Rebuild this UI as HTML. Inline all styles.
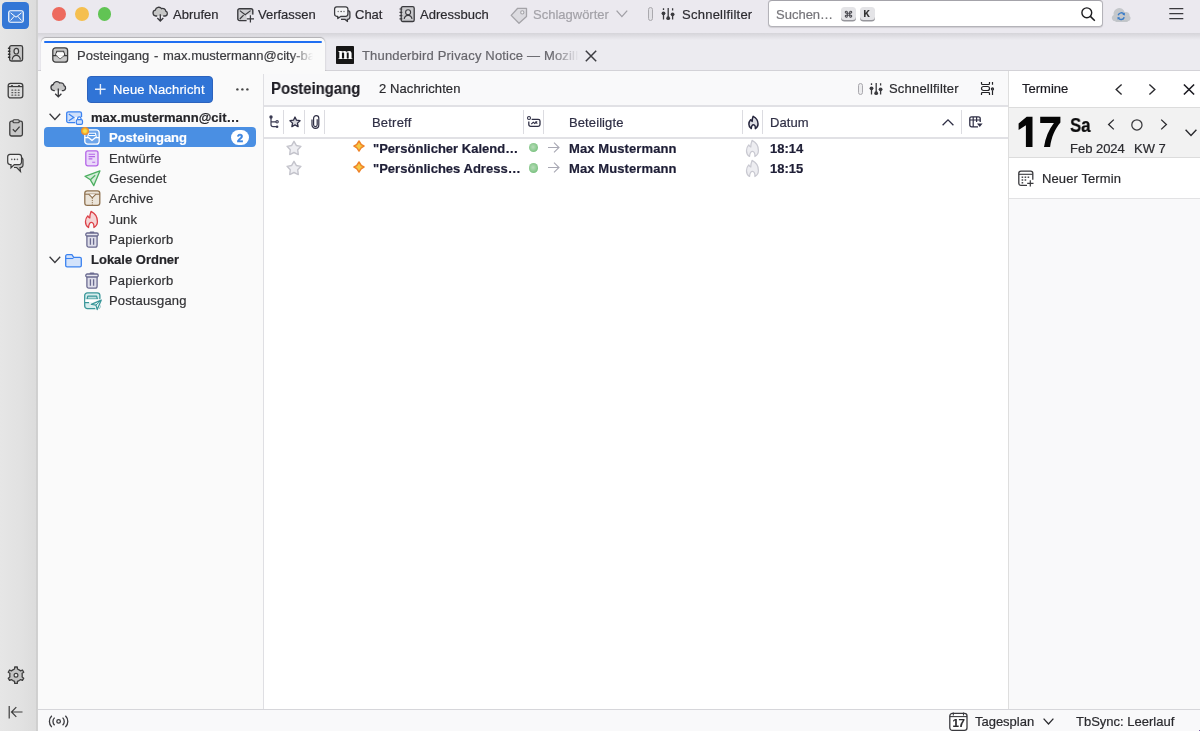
<!DOCTYPE html>
<html><head><meta charset="utf-8">
<style>
*{box-sizing:border-box;margin:0;padding:0}
html,body{width:1200px;height:731px;overflow:hidden;background:#fff;font-family:"Liberation Sans",sans-serif;font-size:13px;color:#2a2a2e}
.a{position:absolute}
.t{position:absolute;white-space:nowrap;line-height:16px;will-change:transform;-webkit-text-stroke:0.2px currentColor}
svg{position:absolute;overflow:visible}
.b{font-weight:700}
</style></head><body>

<!-- spaces bar -->
<div class="a" style="left:0;top:0;width:37.5px;height:731px;background:linear-gradient(to right,#e6e6e6 0,#e1e1e1 60%,#dcdcdc 94%,#cfcfcf 96%,#d2d2d2 100%)"></div>

<!-- toolbar -->
<div class="a" style="left:37.5px;top:0;width:1162.5px;height:33.5px;background:#ebe9ef;border-bottom:1px solid #cfced3"></div>
<!-- tabbar -->
<div class="a" style="left:37.5px;top:33px;width:1162.5px;height:38px;background:#ecebf0;border-bottom:1.3px solid #d3d2d7"></div>

<!-- folder pane -->
<div class="a" style="left:37.5px;top:71px;width:226px;height:638px;background:#fafafa;border-right:1.2px solid #dfdfe3"></div>
<!-- message pane -->
<div class="a" style="left:264px;top:71px;width:744px;height:35px;background:#f9f9fa"></div>
<div class="a" style="left:264px;top:105.2px;width:744px;height:1.7px;background:#e1e1e5"></div>
<div class="a" style="left:264px;top:137.2px;width:744px;height:1.7px;background:#e1e1e5"></div>
<!-- today pane -->
<div class="a" style="left:1008px;top:71px;width:192px;height:638px;background:#fff;border-left:1px solid #dedede"></div>
<div class="a" style="left:1009px;top:107px;width:191px;height:51px;background:#f2f2f2;border-top:1px solid #dcdcdc;border-bottom:1px solid #dcdcdc"></div>
<div class="a" style="left:1009px;top:198px;width:191px;height:511px;background:#f9f9fa;border-top:1.2px solid #e2e2e4"></div>
<!-- status bar -->
<div class="a" style="left:37.5px;top:709px;width:1162.5px;height:22px;background:#f9f9fa;border-top:1.2px solid #d6d6da"></div>


<!-- spaces icons -->
<div class="a" style="left:2.2px;top:2.2px;width:27.2px;height:27.2px;border-radius:4.2px;background:#3377d6"></div>
<svg style="left:8px;top:10px" width="16" height="13" viewBox="0 0 16 13"><rect x="0.75" y="0.75" width="14.5" height="11.5" rx="1.8" fill="#4a87dc" stroke="#fff" stroke-width="1.2"/><path d="M2.5 2.8 L8 7.2 L13.5 2.8 M2.5 10.5 L6.3 6.2 M13.5 10.5 L9.7 6.2" fill="none" stroke="#fff" stroke-width="1"/></svg>
<svg style="left:7px;top:45px" width="17" height="17" viewBox="0 0 17 17"><rect x="2.6" y="0.7" width="13" height="15.3" rx="1.8" fill="#c8c8c8" stroke="#3d3d3d" stroke-width="1.3"/><g fill="#2d2d2d"><rect x="0.8" y="2.6" width="2.6" height="1.3" rx="0.6"/><rect x="0.8" y="5.6" width="2.6" height="1.3" rx="0.6"/><rect x="0.8" y="8.6" width="2.6" height="1.3" rx="0.6"/><rect x="0.8" y="11.6" width="2.6" height="1.3" rx="0.6"/></g><ellipse cx="9.3" cy="6.2" rx="2.3" ry="2.8" fill="#d6d6d6" stroke="#3d3d3d" stroke-width="1.2"/><path d="M5.2 14.6C5.6 11.8 7 10.4 9.3 10.4S13 11.8 13.4 14.6" fill="#d6d6d6" stroke="#3d3d3d" stroke-width="1.2"/></svg>
<svg style="left:7px;top:82px" width="17" height="17" viewBox="0 0 17 17"><rect x="1.2" y="1.3" width="14.6" height="14.6" rx="2.4" fill="#dcdcdc" stroke="#3d3d3d" stroke-width="1.3"/><path d="M1.2 4.6h14.6" stroke="#3d3d3d" stroke-width="1.2"/><circle cx="5" cy="4" r="1.1" fill="#3d3d3d"/><circle cx="12" cy="4" r="1.1" fill="#3d3d3d"/><g fill="#5a5a5a"><rect x="4.3" y="7.5" width="2" height="1.3" rx="0.5"/><rect x="7.5" y="7.5" width="2" height="1.3" rx="0.5"/><rect x="10.7" y="7.5" width="2" height="1.3" rx="0.5"/><rect x="4.3" y="10" width="2" height="1.3" rx="0.5"/><rect x="7.5" y="10" width="2" height="1.3" rx="0.5"/><rect x="10.7" y="10" width="2" height="1.3" rx="0.5"/><rect x="4.3" y="12.5" width="2" height="1.3" rx="0.5"/><rect x="7.5" y="12.5" width="2" height="1.3" rx="0.5"/><rect x="10.7" y="12.5" width="2" height="1.3" rx="0.5"/></g></svg>
<svg style="left:9px;top:119px" width="15" height="18" viewBox="0 0 15 18"><rect x="0.8" y="2.2" width="12.6" height="14.8" rx="1.8" fill="#c8c8c8" stroke="#3d3d3d" stroke-width="1.3"/><rect x="4" y="0.7" width="6.2" height="3" rx="1" fill="#c8c8c8" stroke="#3d3d3d" stroke-width="1.1"/><path d="M3.8 10.2l2.4 2.4l4.4-5" fill="none" stroke="#3d3d3d" stroke-width="1.3"/></svg>
<svg style="left:7px;top:152px" width="17" height="21" viewBox="0 0 17 21"><path d="M5 5.5h8.5a2.5 2.5 0 0 1 2.5 2.5v5a2.5 2.5 0 0 1-2.5 2.5h-0.5l0.5 4l-3.8-4H7" fill="#c8c8c8" stroke="#3d3d3d" stroke-width="1.2"/><path d="M3 2.3h9a2.5 2.5 0 0 1 2.5 2.5v5.3a2.5 2.5 0 0 1-2.5 2.5H7.3L4 15.8V12.6H3A2.5 2.5 0 0 1 0.7 10.1V4.8A2.5 2.5 0 0 1 3 2.3z" fill="#efefef" stroke="#3d3d3d" stroke-width="1.2"/><circle cx="4.8" cy="7.4" r="0.8" fill="#666"/><circle cx="7.6" cy="7.4" r="0.8" fill="#444"/><circle cx="10.4" cy="7.4" r="0.8" fill="#666"/></svg>
<svg style="left:6.8px;top:665.8px" width="18" height="19" viewBox="0 0 18 19"><path d="M5.90 3.83 L7.56 2.96 L7.70 1.00 L10.30 1.00 L10.44 2.96 L12.10 3.83 L13.68 4.84 L15.45 3.98 L16.75 6.23 L15.12 7.33 L15.20 9.20 L15.12 11.07 L16.75 12.17 L15.45 14.42 L13.68 13.56 L12.10 14.57 L10.44 15.44 L10.30 17.40 L7.70 17.40 L7.56 15.44 L5.90 14.57 L4.32 13.56 L2.55 14.42 L1.25 12.17 L2.88 11.07 L2.80 9.20 L2.88 7.33 L1.25 6.23 L2.55 3.98 L4.32 4.84z" fill="#c4c4c4" stroke="#3d3d3d" stroke-width="1.3" stroke-linejoin="round"/><circle cx="9" cy="9.2" r="1.9" fill="#eee" stroke="#3d3d3d" stroke-width="1.2"/></svg>
<svg style="left:8px;top:705px" width="16" height="14" viewBox="0 0 16 14"><path d="M1.2 1v12.5M14.5 7H3.5M8.3 2.2L3.5 7l4.8 4.8" fill="none" stroke="#3d3d3d" stroke-width="1.2"/></svg>

<!-- traffic lights -->
<div class="a" style="left:52px;top:7.2px;width:13.8px;height:13.8px;border-radius:50%;background:#ed6a5e"></div>
<div class="a" style="left:75px;top:7.2px;width:13.8px;height:13.8px;border-radius:50%;background:#f5bf4f"></div>
<div class="a" style="left:97.5px;top:7.2px;width:13.8px;height:13.8px;border-radius:50%;background:#61c454"></div>

<!-- toolbar buttons -->
<svg style="left:152px;top:6px" width="17" height="16" viewBox="0 0 17 16"><path d="M5.2 10H3.8A3 3 0 0 1 3.3 4.1 3.6 3.6 0 0 1 9.6 2.6 3.1 3.1 0 0 1 13.8 5.2 2.5 2.5 0 0 1 13.2 10H11.2" fill="#c6c6c6" stroke="#3a3a3e" stroke-width="1.3"/><path d="M8.3 8.2V15M5.3 12l3 3 3-3" fill="none" stroke="#3a3a3e" stroke-width="1.3"/></svg>
<div class="t" style="left:173.3px;top:6.7px;color:#2c2b30">Abrufen</div>
<svg style="left:236.5px;top:7.5px" width="18" height="15" viewBox="0 0 18 15"><rect x="0.8" y="0.8" width="15" height="11.8" rx="1.8" fill="#cfcfd2" stroke="#3a3a3e" stroke-width="1.4"/><path d="M2.8 2.6l5.4 4.2 5.4-4.2M2.8 11l3.8-3.8" fill="none" stroke="#3a3a3e" stroke-width="1.2"/><rect x="9.6" y="6.6" width="8.4" height="8.4" fill="#ebe9ef"/><path d="M13.4 7.3v7.2M9.8 10.9h7.2" stroke="#3a3a3e" stroke-width="1.25"/></svg>
<div class="t" style="left:258.1px;top:6.7px;color:#2c2b30">Verfassen</div>
<svg style="left:334px;top:6px" width="17" height="17" viewBox="0 0 17 17"><path d="M5.5 4.5h8.2a2.2 2.2 0 0 1 2.2 2.2v4.4a2.2 2.2 0 0 1-2.2 2.2h-0.4l0.2 2.2-2.6-2.2H7" fill="#d0d0d3" stroke="#3a3a3e" stroke-width="1.25" stroke-linejoin="round"/><path d="M2.7 0.9h9a2.2 2.2 0 0 1 2.2 2.2v5a2.2 2.2 0 0 1-2.2 2.2H7L3.8 12.6V10.3H2.7A2.2 2.2 0 0 1 0.6 8.1V3.1A2.2 2.2 0 0 1 2.7 0.9z" fill="#f4f4f6" stroke="#3a3a3e" stroke-width="1.25" stroke-linejoin="round"/><circle cx="4.2" cy="5.6" r="0.75" fill="#777"/><circle cx="7.1" cy="5.6" r="0.75" fill="#444"/><circle cx="10" cy="5.6" r="0.75" fill="#777"/></svg>
<div class="t" style="left:354.9px;top:6.7px;color:#2c2b30">Chat</div>
<svg style="left:399px;top:6px" width="16" height="16" viewBox="0 0 16 16"><rect x="2.2" y="0.7" width="13" height="14.8" rx="1.6" fill="#c9c9cc" stroke="#3a3a3e" stroke-width="1.3"/><path d="M0.5 3h2.8M0.5 6.3h2.8M0.5 9.6h2.8M0.5 12.9h2.8" stroke="#3a3a3e" stroke-width="1.2"/><circle cx="9.1" cy="6.2" r="2.5" fill="#d9d9dc" stroke="#3a3a3e" stroke-width="1.1"/><path d="M5.2 12.8c0.5-2.3 1.9-3.4 3.9-3.4s3.4 1.1 3.9 3.4" fill="#d9d9dc" stroke="#3a3a3e" stroke-width="1.2"/></svg>
<div class="t" style="left:420.1px;top:6.7px;color:#2c2b30">Adressbuch</div>
<svg style="left:510px;top:6.5px" width="18" height="17" viewBox="0 0 18 17"><path d="M7.7 1.3H16.5V9.6L9 16.2 1.2 8.4z" fill="#dcdbe0" stroke="#a4a3a8" stroke-width="1.3" stroke-linejoin="round"/><circle cx="12.3" cy="5.4" r="1.6" fill="#f4f4f6" stroke="#a4a3a8" stroke-width="1.1"/></svg>
<div class="t" style="left:532.7px;top:6.7px;color:#a3a2a8">Schlagwörter</div>
<svg style="left:616.4px;top:10.3px" width="12" height="8" viewBox="0 0 12 8"><path d="M0.6 0.6l5.3 6 5.3-6" fill="none" stroke="#a09fa5" stroke-width="1.3"/></svg>
<div class="a" style="left:648.3px;top:7.3px;width:4.6px;height:13.6px;border-radius:3px;border:1.1px solid #aaa9ae;background:#e2e1e6"></div>
<svg style="left:660px;top:7px" width="16" height="14" viewBox="0 0 16 14"><path d="M3.5 1.3v1.8M3.5 7.5v5M8.2 1v10M12.6 1.3v2.3M12.6 8.8v3.8" stroke="#3a3a3e" stroke-width="1.3"/><circle cx="3.5" cy="6.3" r="1.9" fill="#3a3a3e"/><circle cx="8.2" cy="11.2" r="1.9" fill="#3a3a3e"/><circle cx="12.6" cy="7.3" r="1.9" fill="#3a3a3e"/></svg>
<div class="t" style="left:681.5px;top:6.7px;color:#2c2b30;letter-spacing:0.25px">Schnellfilter</div>

<!-- search -->
<div class="a" style="left:768.3px;top:0.4px;width:334.5px;height:27.1px;border-radius:4px;background:#fff;border:1px solid #b4b3b9;border-top-color:#a4a3aa;box-shadow:0 0.5px 1px rgba(0,0,0,0.12)"></div>
<div class="t" style="left:776.3px;top:6.7px;color:#76757a">Suchen…</div>
<div class="a" style="left:841.1px;top:7.1px;width:14.9px;height:13.2px;border-radius:3.5px;background:#e4e4e7;box-shadow:0 1.4px 0 #96969c"></div>
<svg style="left:845.2px;top:10.8px" width="7" height="6.4" viewBox="0 0 7 6.4"><path d="M2.3 2.2h2.4v2H2.3z M2.3 2.2V1.3A1 1 0 1 0 1.3 2.2H2.3 M4.7 2.2V1.3A1 1 0 1 1 5.7 2.2H4.7 M2.3 4.2V5.1A1 1 0 1 1 1.3 4.2H2.3 M4.7 4.2V5.1A1 1 0 1 0 5.7 4.2H4.7" fill="none" stroke="#4a4a50" stroke-width="1.1"/></svg>
<div class="a" style="left:859.7px;top:7.1px;width:14.9px;height:13.2px;border-radius:3.5px;background:#e4e4e7;box-shadow:0 1.4px 0 #96969c"></div>
<div class="t" style="left:859.2px;top:5.8px;width:15px;text-align:center;font-family:'Liberation Mono',monospace;font-size:11px;font-weight:700;color:#333;-webkit-text-stroke:0">K</div>
<svg style="left:1080.8px;top:6.9px" width="15" height="14" viewBox="0 0 15 14"><circle cx="5.8" cy="5.8" r="4.9" fill="none" stroke="#1c1c1f" stroke-width="1.4"/><path d="M9.4 9.4l4.4 4.4" stroke="#1c1c1f" stroke-width="1.5"/></svg>
<svg style="left:1112px;top:6.8px" width="19" height="15" viewBox="0 0 19 15"><path d="M3.6 14.3A3.4 3.4 0 0 1 1.7 7.9 5.6 5.6 0 0 1 12.6 5.3 3.5 3.5 0 0 1 17.6 8.9 3.1 3.1 0 0 1 15.6 14.3z" fill="#c4c7cb"/><path d="M3.6 14.3h12" stroke="#b3b6ba" stroke-width="0.8"/><path d="M6.2 8.2a3.3 3.3 0 0 1 5.9-0.9M12.2 10.2a3.3 3.3 0 0 1-5.9 0.9" fill="none" stroke="#3a7cc8" stroke-width="1.5"/><path d="M12.8 5.6l0.1 2.8-2.6-0.6zM5.6 12.8l-0.1-2.8 2.6 0.6z" fill="#3a7cc8"/></svg>
<svg style="left:1168.5px;top:7.5px" width="15" height="12" viewBox="0 0 15 12"><path d="M0.3 0.6h14M0.3 5.6h14M0.3 10.6h14" stroke="#3a3a3e" stroke-width="1.3"/></svg>


<!-- tabs -->
<div class="a" style="left:37.5px;top:33px;width:1162.5px;height:7px;background:linear-gradient(#d5d4d9,rgba(236,235,240,0))"></div>
<div class="a" style="left:41.3px;top:37.7px;width:283.7px;height:34.6px;border-radius:5px 5px 0 0;background:#fafafa;box-shadow:0 -0.3px 1px rgba(0,0,0,0.22),1px 0 2px rgba(0,0,0,0.05)"></div><div class="a" style="left:40px;top:71.3px;width:287px;height:3px;background:#fafafa"></div>
<div class="a" style="left:44px;top:40.6px;width:277.8px;height:2.6px;border-radius:2px;background:#1f6ff2"></div>
<svg style="left:52px;top:46.8px" width="17" height="16" viewBox="0 0 17 16"><rect x="0.8" y="0.8" width="14.8" height="14.4" rx="2.8" fill="#c9c9c9" stroke="#3d3d3d" stroke-width="1.3"/><path d="M3.5 8.3L4.8 4.2h6.8l1.3 4.1" fill="#e8e8e8" stroke="#3d3d3d" stroke-width="1.1"/><path d="M0.8 8.6h3.8l3.6 3 3.6-3h3.8" fill="none" stroke="#3d3d3d" stroke-width="1.1"/><path d="M4.6 8.6L8.2 11.4 11.8 8.6z" fill="#fff"/><rect x="4.4" y="6.2" width="7.6" height="2.2" fill="#fff"/></svg>
<div class="t" style="left:76.5px;top:47.5px;color:#3b3b3f;width:236px;word-spacing:1.1px;overflow:hidden;-webkit-mask-image:linear-gradient(to right,#000 214px,transparent 236px)">Posteingang - max.mustermann@city-bau.de</div>
<div class="a" style="left:336.3px;top:45.7px;width:18.2px;height:18.1px;border-radius:0.8px;background:#161616"></div>
<div class="t" style="left:336.3px;top:43.5px;width:18.2px;text-align:center;font-family:'Liberation Serif',serif;font-weight:700;font-size:17px;line-height:20px;color:#fff;letter-spacing:-0.5px">m</div>
<div class="t" style="left:361.9px;top:47.5px;color:#67666c;width:217px;letter-spacing:0.17px;overflow:hidden;-webkit-mask-image:linear-gradient(to right,#000 190px,transparent 217px)">Thunderbird Privacy Notice — Mozilla</div>
<svg style="left:584.5px;top:49.8px" width="12" height="12" viewBox="0 0 12 12"><path d="M0.8 0.8l10.4 10.4M11.2 0.8L0.8 11.2" stroke="#3d3d42" stroke-width="1.5"/></svg>

<!-- folder pane header -->
<svg style="left:49.5px;top:79.6px" width="17" height="18" viewBox="0 0 17 18"><path d="M4.8 10.6H3.9A3.1 3.1 0 0 1 3.3 4.5 3.7 3.7 0 0 1 9.8 3 3.2 3.2 0 0 1 14.1 5.7 2.6 2.6 0 0 1 13.5 10.6H11.8" fill="#c6c6c6" stroke="#3a3a3e" stroke-width="1.3"/><path d="M8.3 8.5V16.8M5.2 13.7l3.1 3.1 3.1-3.1" fill="none" stroke="#3a3a3e" stroke-width="1.3"/></svg>
<div class="a" style="left:86.7px;top:76.3px;width:126.3px;height:26.5px;border-radius:4px;background:#3074d6;border:1px solid #2c63be"></div>
<svg style="left:94.6px;top:83.7px" width="11" height="11" viewBox="0 0 11 11"><path d="M5.4 0v10.6M0 5.3h10.6" stroke="#e6eefa" stroke-width="1.4"/></svg>
<div class="t" style="left:113.3px;top:82.2px;color:#fff;letter-spacing:0.15px">Neue Nachricht</div>
<svg style="left:235.5px;top:88px" width="13" height="3" viewBox="0 0 13 3"><circle cx="1.4" cy="1.4" r="1.2" fill="#444"/><circle cx="6.4" cy="1.4" r="1.2" fill="#444"/><circle cx="11.4" cy="1.4" r="1.2" fill="#444"/></svg>

<!-- folder tree -->
<div class="a" style="left:44px;top:127px;width:212px;height:20px;border-radius:4px;background:#4a8fe3"></div>
<svg style="left:48.5px;top:113px" width="12" height="8" viewBox="0 0 12 8"><path d="M0.6 0.7l5.3 5.8 5.3-5.8" fill="none" stroke="#3a3a3e" stroke-width="1.3"/></svg>
<svg style="left:65.5px;top:110.8px" width="18" height="14" viewBox="0 0 18 14"><rect x="0.7" y="0.8" width="14.8" height="10.8" rx="1.6" fill="#cfe0fb" stroke="#3b82f0" stroke-width="1.3"/><path d="M2.8 3l5 3.4-5 3.3" fill="none" stroke="#3b82f0" stroke-width="1.2"/><rect x="9.2" y="6" width="8.2" height="8" fill="#fafafa"/><path d="M11.6 8.6V7.6a1.7 1.7 0 0 1 3.4 0v1" fill="none" stroke="#3b82f0" stroke-width="1.2"/><rect x="10.3" y="8.6" width="6.2" height="4.7" rx="1.3" fill="#cfe0fb" stroke="#3b82f0" stroke-width="1.2"/></svg>
<div class="t b" style="left:91.3px;top:109.8px;color:#252529">max.mustermann@cit…</div>

<svg style="left:84px;top:129.3px" width="16" height="16" viewBox="0 0 16 16"><rect x="0.8" y="0.8" width="14.4" height="14.4" rx="3" fill="#6fa6ea" stroke="#fff" stroke-width="1.3"/><path d="M3.6 8.3L4.6 4.3h6.8l1 4" fill="#4a8fe3" stroke="#fff" stroke-width="1.1"/><path d="M0.8 8.7h3.9l3.3 2.8 3.3-2.8h3.9" fill="none" stroke="#fff" stroke-width="1.2"/><rect x="4.6" y="6" width="6.8" height="1.2" fill="#fff"/></svg>
<div class="a" style="left:81.3px;top:126.6px;width:8px;height:8px;border-radius:50%;background:radial-gradient(circle closest-side,#fbe84c 0,#f8d843 40%,#f3a22e 72%,#ee8a2a 100%)"></div>
<div class="t b" style="left:109.2px;top:130.2px;color:#fff">Posteingang</div>
<div class="a" style="left:230.7px;top:129.8px;width:18px;height:15.4px;border-radius:8px;background:#fff"></div>
<div class="t b" style="left:230.7px;top:129.8px;width:18px;text-align:center;font-size:11px;color:#3d85e0;-webkit-text-stroke:0.5px #3d85e0">2</div>

<svg style="left:85px;top:149.5px" width="14" height="17" viewBox="0 0 14 17"><rect x="0.8" y="0.8" width="12.2" height="15" rx="2" fill="#ead9f9" stroke="#b565e8" stroke-width="1.3"/><path d="M3.6 4.3h6.4M3.6 6.6h6.4M3.6 8.9h3.8M7.2 12.2h3" stroke="#b565e8" stroke-width="1.1"/></svg>
<div class="t" style="left:108.8px;top:150.5px;letter-spacing:0.15px;color:#333336">Entwürfe</div>

<svg style="left:83.6px;top:170px" width="17" height="17" viewBox="0 0 17 17"><path d="M15.9 0.9L1 6.3l5.4 3.5 3.4 5.8z" fill="#d3ecd8" stroke="#4caf60" stroke-width="1.3" stroke-linejoin="round"/><path d="M6.4 9.8l4.8-4.6" stroke="#4caf60" stroke-width="1.2"/></svg>
<div class="t" style="left:108.8px;top:170.9px;letter-spacing:0.15px;color:#333336">Gesendet</div>

<svg style="left:84px;top:190.2px" width="17" height="17" viewBox="0 0 17 17"><rect x="0.8" y="0.8" width="15" height="14.6" rx="2.4" fill="#ebe4d9" stroke="#8f7250" stroke-width="1.3"/><path d="M0.8 4.2h15" stroke="#8f7250" stroke-width="1.1"/><path d="M4.6 4.2l3.7 3.5 3.7-3.5" fill="#fff" stroke="#8f7250" stroke-width="1.1"/><path d="M8.3 7.7v7.2" stroke="#8f7250" stroke-width="1" stroke-dasharray="1.2 1"/></svg>
<div class="t" style="left:108.8px;top:191.3px;letter-spacing:0.15px;color:#333336">Archive</div>

<svg style="left:85.2px;top:210.8px" width="13" height="17" viewBox="0 0 12.5 16.5"><path d="M5.8 0.4C9.5 2.2 12 6 12 10.2 12 12.8 10.8 14.8 8.6 16 8.8 13 7.8 11 6.2 11 4.6 11 3.6 13 3.4 16 1.4 14.8 0.4 12.6 0.4 10.4 0.4 8 1.2 6.2 2.6 4.7 3.2 5.8 3.8 6.5 4.6 6.8 4.6 4.6 5 2.4 5.8 0.4z" fill="#f5d5d6" stroke="#dc4047" stroke-width="1.25" stroke-linejoin="round"/></svg>
<div class="t" style="left:108.8px;top:211.6px;letter-spacing:0.15px;color:#333336">Junk</div>

<svg style="left:85px;top:231.2px" width="14" height="17" viewBox="0 0 14 17"><rect x="4.6" y="0.5" width="4.8" height="1.8" rx="0.9" fill="#6b6b90"/><path d="M1.9 4.8V14.3a1.9 1.9 0 0 0 1.9 1.9H10.2a1.9 1.9 0 0 0 1.9-1.9V4.8" fill="#dedeea" stroke="#6b6b90" stroke-width="1.3"/><rect x="0.8" y="2" width="12.4" height="3" rx="1.3" fill="#e6e6ef" stroke="#6b6b90" stroke-width="1.3"/><path d="M5.4 7.2v6.6M8.6 7.2v6.6" stroke="#6b6b90" stroke-width="1.3"/></svg>
<div class="t" style="left:108.8px;top:231.9px;letter-spacing:0.15px;color:#333336">Papierkorb</div>

<svg style="left:48.5px;top:255.8px" width="12" height="8" viewBox="0 0 12 8"><path d="M0.6 0.7l5.3 5.8 5.3-5.8" fill="none" stroke="#3a3a3e" stroke-width="1.3"/></svg>
<svg style="left:65.4px;top:253.7px" width="17" height="14" viewBox="0 0 17 14"><path d="M0.7 11.4V2.1A1.4 1.4 0 0 1 2.1 0.7H6.9L8.7 3.3H14.9A1.4 1.4 0 0 1 16.3 4.7V11.4A1.4 1.4 0 0 1 14.9 12.8H2.1A1.4 1.4 0 0 1 0.7 11.4z" fill="#d3e3fb" stroke="#3b82f0" stroke-width="1.3"/><path d="M0.7 4.5H8.4" stroke="#3b82f0" stroke-width="1.1"/></svg>
<div class="t b" style="left:91.3px;top:252.2px;color:#252529">Lokale Ordner</div>

<svg style="left:85px;top:272px" width="14" height="17" viewBox="0 0 14 17"><rect x="4.6" y="0.5" width="4.8" height="1.8" rx="0.9" fill="#6b6b90"/><path d="M1.9 4.8V14.3a1.9 1.9 0 0 0 1.9 1.9H10.2a1.9 1.9 0 0 0 1.9-1.9V4.8" fill="#dedeea" stroke="#6b6b90" stroke-width="1.3"/><rect x="0.8" y="2" width="12.4" height="3" rx="1.3" fill="#e6e6ef" stroke="#6b6b90" stroke-width="1.3"/><path d="M5.4 7.2v6.6M8.6 7.2v6.6" stroke="#6b6b90" stroke-width="1.3"/></svg>
<div class="t" style="left:108.8px;top:272.6px;letter-spacing:0.15px;color:#333336">Papierkorb</div>

<svg style="left:84px;top:292px" width="19" height="19" viewBox="0 0 19 19"><rect x="0.7" y="0.8" width="15.2" height="15.8" rx="2.7" fill="#d6eded" stroke="#3a979a" stroke-width="1.3"/><path d="M3 7L3.8 4.1H12.6L13.4 7z" fill="#b9dcdd" stroke="#3a979a" stroke-width="1.2" stroke-linejoin="round"/><rect x="1.4" y="7.3" width="13.6" height="3" fill="#fff"/><path d="M0.7 10.6H5" stroke="#3a979a" stroke-width="1.2"/><path d="M17.2 8.2L7.2 12.3 11.9 13.1 13.2 17.6z" fill="#fff" stroke="#fafafa" stroke-width="3" stroke-linejoin="round"/><path d="M17.2 8.2L7.2 12.3 11.9 13.1 13.2 17.6z" fill="#e9f5f5" stroke="#3a979a" stroke-width="1.25" stroke-linejoin="round"/><path d="M11.9 13.1L17.2 8.2" stroke="#3a979a" stroke-width="1"/></svg>
<div class="t" style="left:108.8px;top:293px;letter-spacing:0.15px;color:#333336">Postausgang</div>


<!-- message list header -->
<div class="t b" style="left:271.2px;top:79.6px;font-size:15.6px;line-height:18px;color:#1c1b22;-webkit-text-stroke:0.1px currentColor;transform:scaleX(0.955);transform-origin:0 0">Posteingang</div>
<div class="t" style="left:378.8px;top:81.3px;color:#2a2a2e;letter-spacing:0.1px">2 Nachrichten</div>
<div class="a" style="left:858px;top:83.3px;width:5px;height:11.3px;border-radius:3px;border:1.1px solid #aaa9ae;background:#ececee"></div>
<svg style="left:868px;top:82px" width="16" height="14" viewBox="0 0 16 14"><path d="M3.5 1.2v1.8M3.5 7.5v5M8.2 1v10M12.6 1.2v2.3M12.6 8.8v3.8" stroke="#3a3a3e" stroke-width="1.3"/><circle cx="3.5" cy="6.3" r="1.9" fill="#3a3a3e"/><circle cx="8.2" cy="11.2" r="1.9" fill="#3a3a3e"/><circle cx="12.6" cy="7.3" r="1.9" fill="#3a3a3e"/></svg>
<div class="t" style="left:888.8px;top:81px;color:#2a2a2e;letter-spacing:0.2px">Schnellfilter</div>
<svg style="left:980px;top:81px" width="15" height="15" viewBox="0 0 15 15"><path d="M1.5 1V2.6a0.9 0.9 0 0 0 0.9 0.9H8.6a0.9 0.9 0 0 0 0.9-0.9V1M1.5 14V12.4a0.9 0.9 0 0 1 0.9-0.9H8.6a0.9 0.9 0 0 1 0.9 0.9V14M12.5 1V3.8M12.5 9.2V14" fill="none" stroke="#222226" stroke-width="1.2"/><rect x="1.5" y="5.5" width="8" height="4" rx="2" fill="none" stroke="#222226" stroke-width="1.2"/><circle cx="12.5" cy="7.9" r="1.6" fill="#222226"/><circle cx="12.5" cy="7.9" r="0.5" fill="#888"/></svg>

<!-- column header -->
<div class="a" style="left:283.4px;top:110.2px;width:1px;height:23.4px;background:#dcdce1"></div>
<div class="a" style="left:303.9px;top:110.2px;width:1px;height:23.4px;background:#dcdce1"></div>
<div class="a" style="left:324.3px;top:110.2px;width:1px;height:23.4px;background:#dcdce1"></div>
<div class="a" style="left:522.5px;top:110.2px;width:1px;height:23.4px;background:#dcdce1"></div>
<div class="a" style="left:543.2px;top:110.2px;width:1px;height:23.4px;background:#dcdce1"></div>
<div class="a" style="left:741.9px;top:110.2px;width:1px;height:23.4px;background:#dcdce1"></div>
<div class="a" style="left:762.3px;top:110.2px;width:1px;height:23.4px;background:#dcdce1"></div>
<div class="a" style="left:960.8px;top:110.2px;width:1px;height:23.4px;background:#dcdce1"></div>
<svg style="left:268.6px;top:115px" width="11" height="14" viewBox="0 0 11 14"><circle cx="2" cy="2" r="1.7" fill="#3a3a52"/><path d="M2 2v7.6a2.1 2.1 0 0 0 2.1 2.1H7.4M2 6.8h5.4" fill="none" stroke="#3a3a52" stroke-width="1.2"/><circle cx="8.1" cy="6.8" r="1.2" fill="#fff" stroke="#3a3a52" stroke-width="1.1"/><circle cx="8.1" cy="11.7" r="1.3" fill="#3a3a52"/></svg>
<svg style="left:288.6px;top:116px" width="12" height="12" viewBox="0 0 12 12"><path d="M6.00 1.00L7.53 4.20L11.04 4.66L8.47 7.10L9.12 10.59L6.00 8.90L2.88 10.59L3.53 7.10L0.96 4.66L4.47 4.20z" fill="#d6d6dc" stroke="#2f2f45" stroke-width="1.3" stroke-linejoin="round"/></svg>
<svg style="left:310.8px;top:115px" width="9" height="14" viewBox="0 0 9 14"><path d="M6.2 4.2v5.6a1.8 1.8 0 0 1-3.6 0V3.2a2.6 2.6 0 0 1 5.2 0v6.8a3.4 3.4 0 0 1-6.8 0V4.6" fill="none" stroke="#2f2f45" stroke-width="1.2"/></svg>
<div class="t" style="left:372px;top:114.7px;color:#2f2f45;letter-spacing:0.2px">Betreff</div>
<svg style="left:526.5px;top:116px" width="14" height="11" viewBox="0 0 14 11"><circle cx="2" cy="2" r="1.5" fill="none" stroke="#2f2f45" stroke-width="1.1"/><path d="M4.6 3.3h6.6a1.8 1.8 0 0 1 1.8 1.8v3.4a1.8 1.8 0 0 1-1.8 1.8H3.6a1.8 1.8 0 0 1-1.8-1.8V5.4" fill="none" stroke="#2f2f45" stroke-width="1.3"/><path d="M4.3 8.2l2-2 1.5 1.2 2.3-2M8.3 5.6l2 2" fill="none" stroke="#2f2f45" stroke-width="1.2"/></svg>
<div class="t" style="left:568.5px;top:114.7px;color:#2f2f45;letter-spacing:0.1px">Beteiligte</div>
<svg style="left:747.6px;top:115.6px" width="11" height="13" viewBox="0 0 12.5 16.5"><path d="M5.8 0.4C9.5 2.2 12 6 12 10.2 12 12.8 10.8 14.8 8.6 16 8.8 13 7.8 11 6.2 11 4.6 11 3.6 13 3.4 16 1.4 14.8 0.4 12.6 0.4 10.4 0.4 8 1.2 6.2 2.6 4.7 3.2 5.8 3.8 6.5 4.6 6.8 4.6 4.6 5 2.4 5.8 0.4z" fill="#dcdce2" stroke="#24243c" stroke-width="1.9" stroke-linejoin="round"/></svg>
<div class="t" style="left:770.4px;top:114.7px;color:#2f2f45;letter-spacing:0.1px">Datum</div>
<svg style="left:942px;top:118.5px" width="12" height="7" viewBox="0 0 12 7"><path d="M0.6 6.3l5.4-5.4 5.4 5.4" fill="none" stroke="#2f2f45" stroke-width="1.3"/></svg>
<svg style="left:969px;top:115.6px" width="14" height="12" viewBox="0 0 14 12"><path d="M9 10.8H2.6A1.8 1.8 0 0 1 0.8 9V2.6A1.8 1.8 0 0 1 2.6 0.8h6.8a1.8 1.8 0 0 1 1.8 1.8V6" fill="none" stroke="#2f2f45" stroke-width="1.3"/><path d="M0.8 4h10.4M4.2 1v10M7.6 1v5" stroke="#2f2f45" stroke-width="1.2"/><path d="M8 7.6h5.6L10.8 11z" fill="#2f2f45"/></svg>

<!-- rows -->
<svg style="left:286.2px;top:140px" width="16" height="16" viewBox="0 0 16 16"><path d="M8.00 1.30L10.29 5.44L14.94 6.34L11.71 9.81L12.29 14.51L8.00 12.50L3.71 14.51L4.29 9.81L1.06 6.34L5.71 5.44z" fill="#eeeef2" stroke="#c4c4cc" stroke-width="1.4" stroke-linejoin="round"/></svg>
<svg style="left:286.2px;top:160.3px" width="16" height="16" viewBox="0 0 16 16"><path d="M8.00 1.30L10.29 5.44L14.94 6.34L11.71 9.81L12.29 14.51L8.00 12.50L3.71 14.51L4.29 9.81L1.06 6.34L5.71 5.44z" fill="#eeeef2" stroke="#c4c4cc" stroke-width="1.4" stroke-linejoin="round"/></svg>
<svg style="left:353px;top:140.3px" width="12" height="12" viewBox="0 0 12 12"><path d="M6 1C6.9 3.4 8.6 5.1 11 6 8.6 6.9 6.9 8.6 6 11 5.1 8.6 3.4 6.9 1 6 3.4 5.1 5.1 3.4 6 1z" fill="#f5c944" stroke="#ef8429" stroke-width="1.6" stroke-linejoin="round"/></svg>
<svg style="left:353px;top:160.6px" width="12" height="12" viewBox="0 0 12 12"><path d="M6 1C6.9 3.4 8.6 5.1 11 6 8.6 6.9 6.9 8.6 6 11 5.1 8.6 3.4 6.9 1 6 3.4 5.1 5.1 3.4 6 1z" fill="#f5c944" stroke="#ef8429" stroke-width="1.6" stroke-linejoin="round"/></svg>
<div class="t b" style="left:372.5px;top:140.8px;color:#1e1e36;letter-spacing:0.02px">"Persönlicher Kalend…</div>
<div class="t b" style="left:372.5px;top:161.1px;color:#1e1e36;letter-spacing:0.02px">"Persönliches Adress…</div>
<div class="a" style="left:528.6px;top:143px;width:9.6px;height:9.4px;border-radius:50%;background:radial-gradient(circle at 45% 45%,#b7dcb9 0,#8fcb93 50%,#5cb466 100%)"></div>
<div class="a" style="left:528.6px;top:163.2px;width:9.6px;height:9.4px;border-radius:50%;background:radial-gradient(circle at 45% 45%,#b7dcb9 0,#8fcb93 50%,#5cb466 100%)"></div>
<svg style="left:548px;top:141.5px" width="12" height="11" viewBox="0 0 12 11"><path d="M0 5.5h11M6 0.6l5 4.9-5 4.9" fill="none" stroke="#a9a9b4" stroke-width="1.1"/></svg>
<svg style="left:548px;top:161.8px" width="12" height="11" viewBox="0 0 12 11"><path d="M0 5.5h11M6 0.6l5 4.9-5 4.9" fill="none" stroke="#a9a9b4" stroke-width="1.1"/></svg>
<div class="t b" style="left:568.5px;top:140.8px;color:#1e1e36;letter-spacing:0.1px">Max Mustermann</div>
<div class="t b" style="left:568.5px;top:161.1px;color:#1e1e36;letter-spacing:0.1px">Max Mustermann</div>
<svg style="left:746px;top:139.5px" width="13" height="17" viewBox="0 0 12.5 16.5"><path d="M5.8 0.4C9.5 2.2 12 6 12 10.2 12 12.8 10.8 14.8 8.6 16 8.8 13 7.8 11 6.2 11 4.6 11 3.6 13 3.4 16 1.4 14.8 0.4 12.6 0.4 10.4 0.4 8 1.2 6.2 2.6 4.7 3.2 5.8 3.8 6.5 4.6 6.8 4.6 4.6 5 2.4 5.8 0.4z" fill="#ededf1" stroke="#c9c9d1" stroke-width="1.2" stroke-linejoin="round"/></svg>
<svg style="left:746px;top:159.8px" width="13" height="17" viewBox="0 0 12.5 16.5"><path d="M5.8 0.4C9.5 2.2 12 6 12 10.2 12 12.8 10.8 14.8 8.6 16 8.8 13 7.8 11 6.2 11 4.6 11 3.6 13 3.4 16 1.4 14.8 0.4 12.6 0.4 10.4 0.4 8 1.2 6.2 2.6 4.7 3.2 5.8 3.8 6.5 4.6 6.8 4.6 4.6 5 2.4 5.8 0.4z" fill="#ededf1" stroke="#c9c9d1" stroke-width="1.2" stroke-linejoin="round"/></svg>
<div class="t b" style="left:770.4px;top:140.8px;color:#1e1e36">18:14</div>
<div class="t b" style="left:770.4px;top:161.1px;color:#1e1e36">18:15</div>

<!-- today pane -->
<div class="t" style="left:1021.9px;top:81px;color:#1c1b22">Termine</div>
<svg style="left:1114px;top:83.6px" width="9" height="12" viewBox="0 0 9 12"><path d="M7.6 0.6L2.2 5.5l5.4 4.9" fill="none" stroke="#2a2a2e" stroke-width="1.4"/></svg>
<svg style="left:1147.8px;top:83.6px" width="9" height="12" viewBox="0 0 9 12"><path d="M1.4 0.6L6.8 5.5l-5.4 4.9" fill="none" stroke="#2a2a2e" stroke-width="1.4"/></svg>
<svg style="left:1182.5px;top:83.8px" width="12" height="11" viewBox="0 0 12 11"><path d="M0.9 0.5l10.2 10M11.1 0.5L0.9 10.5" stroke="#1c1b22" stroke-width="1.6"/></svg>
<svg style="left:1018px;top:116px" width="44" height="32" viewBox="0 0 44 32"><path d="M7.9 30.9V9.3L0.6 13.9V7.4L8.7 0.8H14.5V30.9Z" fill="#050505"/><path d="M22.2 0.8H42.4V6.4C36.9 12.8 33.4 21 32.1 30.9H26C27.4 21.6 30.8 13.4 35.9 6.9H22.2Z" fill="#050505"/></svg>
<div class="t b" style="left:1069.6px;top:113.5px;font-size:19.5px;line-height:23px;color:#0c0c0d;transform:scaleX(0.86);transform-origin:0 0">Sa</div>
<svg style="left:1106.5px;top:119.3px" width="8" height="11" viewBox="0 0 8 11"><path d="M6.8 0.6L1.6 5.5l5.2 4.9" fill="none" stroke="#2a2a2e" stroke-width="1.3"/></svg>
<svg style="left:1131.4px;top:119.1px" width="12" height="12" viewBox="0 0 12 12"><circle cx="5.9" cy="5.9" r="5.1" fill="none" stroke="#38383c" stroke-width="1.25"/></svg>
<svg style="left:1160px;top:119.3px" width="8" height="11" viewBox="0 0 8 11"><path d="M1.2 0.6l5.2 4.9-5.2 4.9" fill="none" stroke="#2a2a2e" stroke-width="1.3"/></svg>
<svg style="left:1184.8px;top:128.6px" width="12" height="8" viewBox="0 0 12 8"><path d="M0.6 0.8l5.4 5.6 5.4-5.6" fill="none" stroke="#2a2a2e" stroke-width="1.4"/></svg>
<div class="t" style="left:1069.8px;top:140.8px;color:#2a2a2e;letter-spacing:-0.02px">Feb 2024</div>
<div class="t" style="left:1133.5px;top:140.8px;color:#2a2a2e">KW 7</div>
<svg style="left:1018px;top:170.3px" width="17" height="17" viewBox="0 0 17 17"><path d="M9 15.4H3A2.2 2.2 0 0 1 0.8 13.2V3.3A2.2 2.2 0 0 1 3 1.1h9.6a2.2 2.2 0 0 1 2.2 2.2v6.4" fill="none" stroke="#3a3a3e" stroke-width="1.3"/><path d="M0.8 4.3h14" stroke="#3a3a3e" stroke-width="1.1"/><g fill="#3a3a3e"><rect x="3.6" y="6.5" width="1.6" height="1.4"/><rect x="6.6" y="6.5" width="1.6" height="1.4"/><rect x="9.6" y="6.5" width="1.6" height="1.4"/><rect x="3.6" y="9.3" width="1.6" height="1.4"/><rect x="6.6" y="9.3" width="1.6" height="1.4"/><rect x="3.6" y="12.1" width="1.6" height="1.4"/></g><path d="M12.3 10.2v6.3M9.2 13.4h6.3" stroke="#3a3a3e" stroke-width="1.2"/></svg>
<div class="t" style="left:1041.8px;top:171.3px;color:#2a2a2e;letter-spacing:0.1px">Neuer Termin</div>

<!-- status bar -->
<svg style="left:48.6px;top:715.2px" width="20" height="13" viewBox="0 0 20 13"><circle cx="9.6" cy="6.4" r="1.8" fill="none" stroke="#3a3a3e" stroke-width="1.3"/><path d="M5.6 2.6a5.2 5.2 0 0 0 0 7.6M13.6 2.6a5.2 5.2 0 0 1 0 7.6M2.8 0.7a8 8 0 0 0 0 11.4M16.4 0.7a8 8 0 0 1 0 11.4" fill="none" stroke="#3a3a3e" stroke-width="1.3"/></svg>
<svg style="left:949px;top:712.3px" width="19" height="19" viewBox="0 0 19 19"><rect x="0.8" y="1.4" width="17.2" height="17" rx="2.6" fill="#fff" stroke="#3a3a3e" stroke-width="1.3"/><path d="M0.8 4.6h17.2" stroke="#3a3a3e" stroke-width="1.1"/><path d="M4.3 0.5v3M14.5 0.5v3" stroke="#3a3a3e" stroke-width="1.1"/></svg>
<div class="t b" style="left:949px;top:715.5px;width:19px;text-align:center;font-size:11.5px;line-height:14px;color:#2a2a2e;letter-spacing:-0.3px">17</div>
<div class="t" style="left:975px;top:713.9px;color:#2a2a2e;letter-spacing:-0.02px">Tagesplan</div>
<svg style="left:1042.9px;top:718.4px" width="11" height="8" viewBox="0 0 11 8"><path d="M0.6 0.6l4.9 5.4 4.9-5.4" fill="none" stroke="#2a2a2e" stroke-width="1.3"/></svg>
<div class="t" style="left:1075.6px;top:713.9px;color:#2a2a2e">TbSync: Leerlauf</div>

<div class="a" style="left:1199px;top:730px;width:1px;height:1px;background:#7d62a8"></div>
</body></html>
